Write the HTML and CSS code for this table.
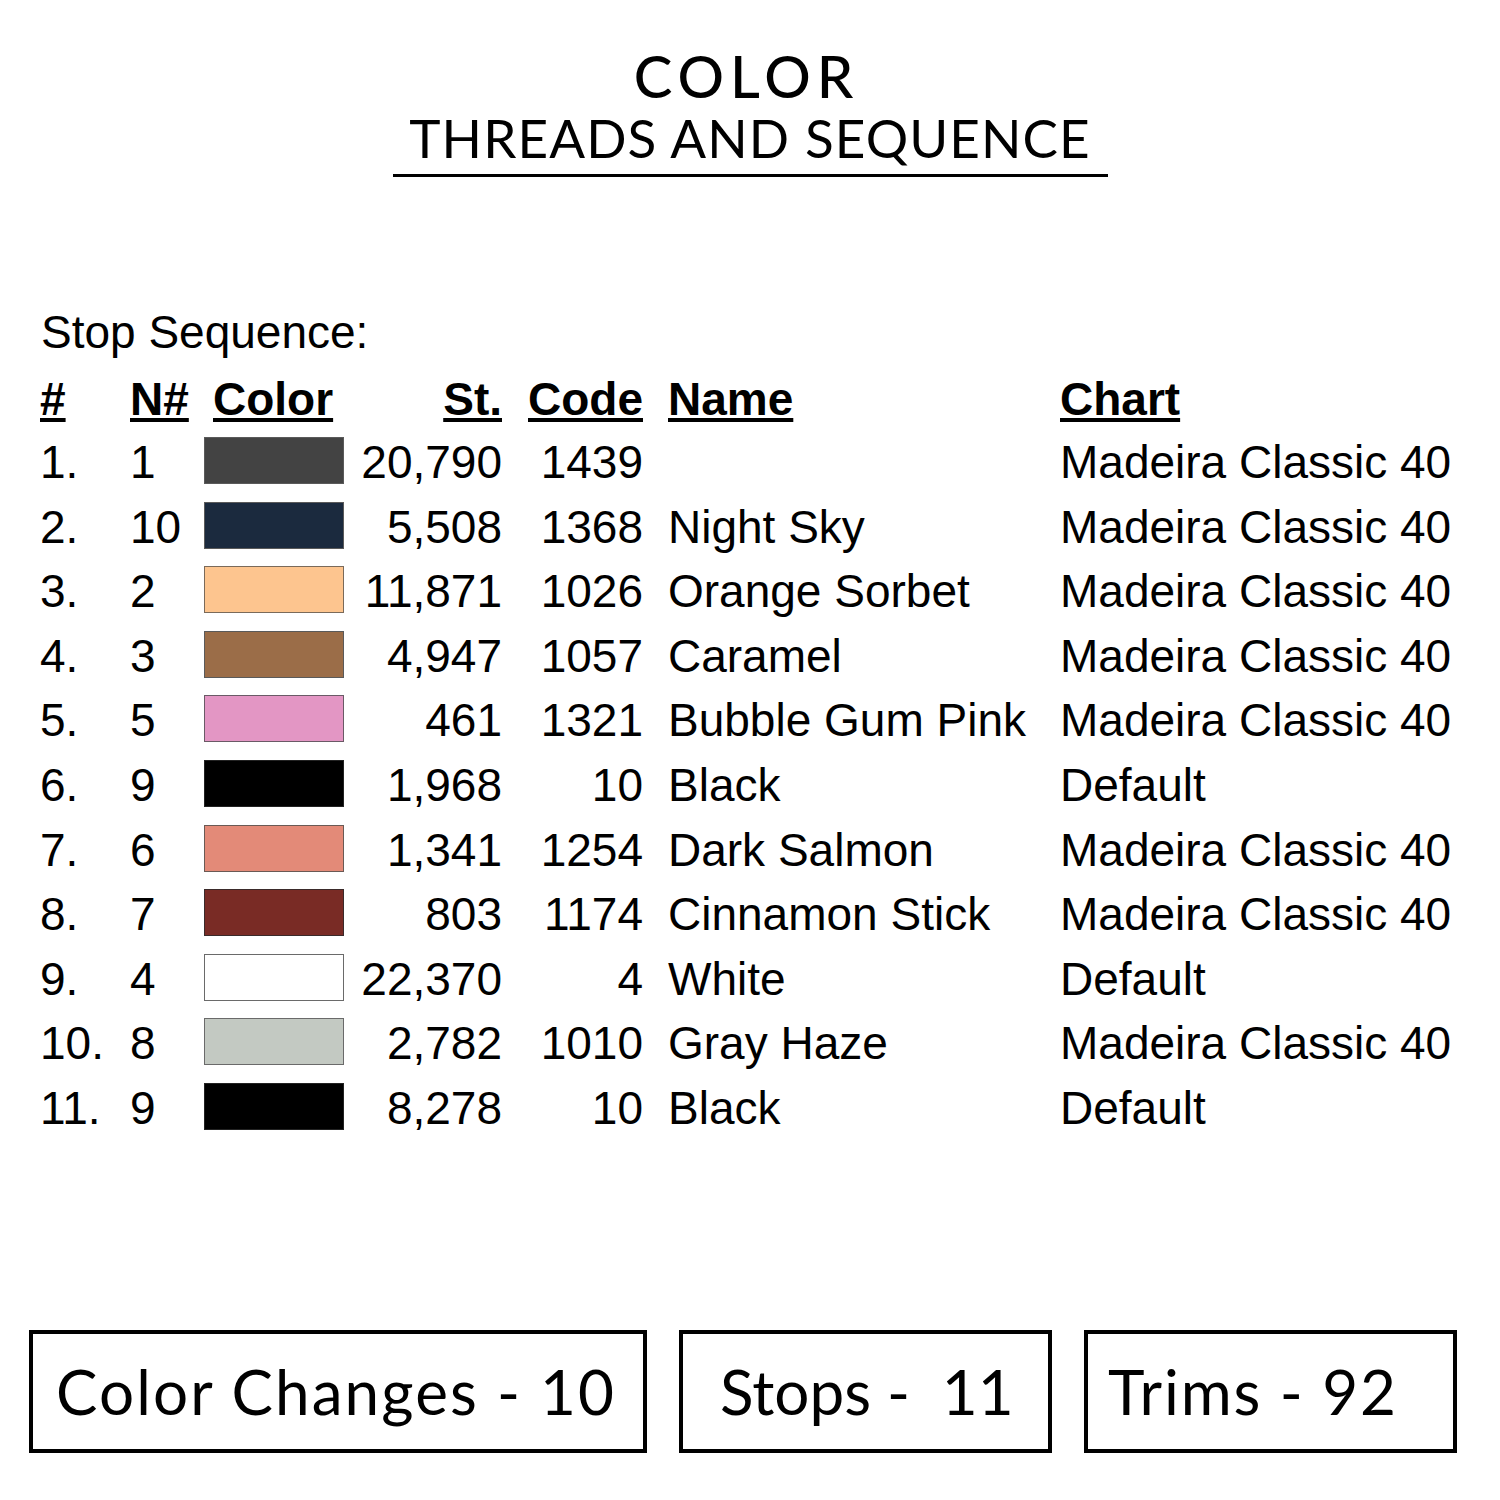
FILE: index.html
```html
<!DOCTYPE html>
<html>
<head>
<meta charset="utf-8">
<link rel="stylesheet" href="styles.css">
</head>
<body>
<div class="page">
  <header class="head">
    <div class="title">COLOR</div>
    <div class="subtitle">THREADS AND SEQUENCE</div>
  </header>

  <div class="seq-label">Stop Sequence:</div>

  <div class="table">
    <div class="row hdr">
      <div class="c-num"><span class="u">#</span></div>
      <div class="c-n"><span class="u">N#</span></div>
      <div class="c-col hdr-col"><span class="u">Color</span></div>
      <div class="c-st"><span class="u">St.</span></div>
      <div class="c-code"><span class="u">Code</span></div>
      <div class="c-name"><span class="u">Name</span></div>
      <div class="c-chart"><span class="u">Chart</span></div>
    </div>

    <div class="row"><div class="c-num">1.</div><div class="c-n">1</div><div class="c-col"><span class="sw sw-1"></span></div><div class="c-st">20,790</div><div class="c-code">1439</div><div class="c-name"></div><div class="c-chart">Madeira Classic 40</div></div>
    <div class="row"><div class="c-num">2.</div><div class="c-n">10</div><div class="c-col"><span class="sw sw-2"></span></div><div class="c-st">5,508</div><div class="c-code">1368</div><div class="c-name">Night Sky</div><div class="c-chart">Madeira Classic 40</div></div>
    <div class="row"><div class="c-num">3.</div><div class="c-n">2</div><div class="c-col"><span class="sw sw-3"></span></div><div class="c-st">11,871</div><div class="c-code">1026</div><div class="c-name">Orange Sorbet</div><div class="c-chart">Madeira Classic 40</div></div>
    <div class="row"><div class="c-num">4.</div><div class="c-n">3</div><div class="c-col"><span class="sw sw-4"></span></div><div class="c-st">4,947</div><div class="c-code">1057</div><div class="c-name">Caramel</div><div class="c-chart">Madeira Classic 40</div></div>
    <div class="row"><div class="c-num">5.</div><div class="c-n">5</div><div class="c-col"><span class="sw sw-5"></span></div><div class="c-st">461</div><div class="c-code">1321</div><div class="c-name">Bubble Gum Pink</div><div class="c-chart">Madeira Classic 40</div></div>
    <div class="row"><div class="c-num">6.</div><div class="c-n">9</div><div class="c-col"><span class="sw sw-6"></span></div><div class="c-st">1,968</div><div class="c-code">10</div><div class="c-name">Black</div><div class="c-chart">Default</div></div>
    <div class="row"><div class="c-num">7.</div><div class="c-n">6</div><div class="c-col"><span class="sw sw-7"></span></div><div class="c-st">1,341</div><div class="c-code">1254</div><div class="c-name">Dark Salmon</div><div class="c-chart">Madeira Classic 40</div></div>
    <div class="row"><div class="c-num">8.</div><div class="c-n">7</div><div class="c-col"><span class="sw sw-8"></span></div><div class="c-st">803</div><div class="c-code">1174</div><div class="c-name">Cinnamon Stick</div><div class="c-chart">Madeira Classic 40</div></div>
    <div class="row"><div class="c-num">9.</div><div class="c-n">4</div><div class="c-col"><span class="sw sw-9"></span></div><div class="c-st">22,370</div><div class="c-code">4</div><div class="c-name">White</div><div class="c-chart">Default</div></div>
    <div class="row"><div class="c-num">10.</div><div class="c-n">8</div><div class="c-col"><span class="sw sw-10"></span></div><div class="c-st">2,782</div><div class="c-code">1010</div><div class="c-name">Gray Haze</div><div class="c-chart">Madeira Classic 40</div></div>
    <div class="row"><div class="c-num">11.</div><div class="c-n">9</div><div class="c-col"><span class="sw sw-6"></span></div><div class="c-st">8,278</div><div class="c-code">10</div><div class="c-name">Black</div><div class="c-chart">Default</div></div>
  </div>

  <div class="stats">
    <div class="stat stat-wide">Color Changes - 10</div>
    <div class="stat stat-stops">Stops -&nbsp; 11</div>
    <div class="stat stat-trims">Trims - 92</div>
  </div>
</div>
</body>
</html>
```

FILE: styles.css
```css
html, body {
  margin: 0;
  padding: 0;
  background: #fff;
}

.page {
  width: 1500px;
  height: 1500px;
  color: #000;
  position: relative;
  overflow: hidden;
}

.head {
  width: 715px;
  margin: 0 auto;
  padding-top: 44px;
  border-bottom: 3px solid #000;
  text-align: center;
  font-family: "Lato", "Open Sans", sans-serif;
  box-sizing: border-box;
}

.title {
  font-size: 58px;
  font-weight: 500;
  line-height: 64px;
  letter-spacing: 6px;
  padding-right: 7px;
}

.subtitle {
  font-size: 53px;
  font-weight: 400;
  line-height: 60px;
  letter-spacing: 1.1px;
  padding-bottom: 6px;
}

.seq-label {
  margin-top: 129px;
  padding-left: 41px;
  font-family: "Liberation Sans", Arial, sans-serif;
  font-size: 46px;
  line-height: 52px;
}

.table {
  margin-top: 11px;
  padding-left: 40px;
  font-family: "Liberation Sans", Arial, sans-serif;
  font-size: 46px;
}

.row {
  display: grid;
  grid-template-columns: 90px 74px 140px 158px 141px 417px 1fr;
  line-height: 64.6px;
  height: 64.6px;
  white-space: nowrap;
}

.row.hdr {
  font-weight: 700;
  line-height: 61px;
  height: 61px;
}

.u {
  text-decoration: underline;
  text-decoration-thickness: 4px;
  text-underline-offset: 3px;
}

.hdr-col {
  padding-left: 9px;
}

.c-st, .c-code {
  text-align: right;
}

.c-name {
  padding-left: 25px;
}

.sw {
  display: block;
  box-sizing: border-box;
  width: 140px;
  height: 47px;
  margin-top: 7px;
  border: 1.5px solid #5a5a5a;
}

.sw-1 { background: #434343; }
.sw-2 { background: #1b2a3e; }
.sw-3 { background: #fdc58f; border-color: #7a6a5a; }
.sw-4 { background: #9b6d48; }
.sw-5 { background: #e396c4; border-color: #6a5a66; }
.sw-6 { background: #000; border-color: #222; }
.sw-7 { background: #e38a78; border-color: #6a5a55; }
.sw-8 { background: #792b25; border-color: #3a2a2a; }
.sw-9 { background: #fff; border-color: #6a6a6a; }
.sw-10 { background: #c3c9c2; border-color: #6a6a6a; }

.stats {
  position: absolute;
  left: 29px;
  top: 1330px;
  display: flex;
  gap: 32px;
  font-family: "Lato", "Open Sans", sans-serif;
}

.stat {
  box-sizing: border-box;
  width: 373px;
  height: 123px;
  border: 4px solid #000;
  display: flex;
  align-items: center;
  font-size: 62px;
  letter-spacing: 1px;
  padding-bottom: 2px;
}

.stat-wide {
  width: 618px;
  padding-left: 23px;
  letter-spacing: 2.1px;
}

.stat-stops {
  padding-left: 37px;
  letter-spacing: 0;
}

.stat-trims {
  padding-left: 20px;
  letter-spacing: 1.8px;
}
```
